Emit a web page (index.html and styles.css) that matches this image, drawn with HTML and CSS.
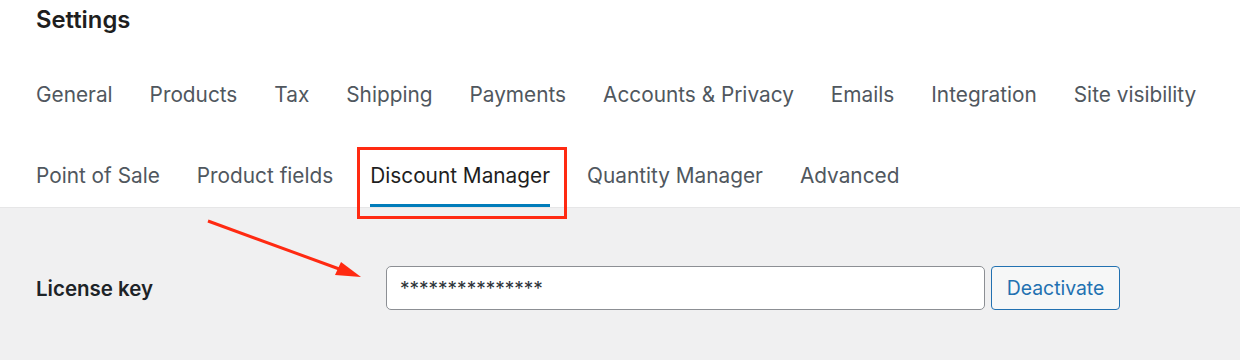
FILE: index.html
```html
<!DOCTYPE html>
<html lang="en">
<head>
    <meta charset="UTF-8">
    <meta name="viewport" content="width=device-width, initial-scale=1.0">
    <title>Settings</title>
    <link rel="stylesheet" href="styles.css">
</head>
<body>
    <div class="page">
        <header class="top">
            <h1>Settings</h1>
            <nav class="tabs">
                <a class="tab">General</a>
                <a class="tab">Products</a>
                <a class="tab">Tax</a>
                <a class="tab">Shipping</a>
                <a class="tab">Payments</a>
                <a class="tab">Accounts &amp; Privacy</a>
                <a class="tab">Emails</a>
                <a class="tab">Integration</a>
                <a class="tab">Site visibility</a>
                <a class="tab">Point of Sale</a>
                <a class="tab">Product fields</a>
                <a class="tab active">Discount Manager</a>
                <a class="tab">Quantity Manager</a>
                <a class="tab">Advanced</a>
            </nav>
        </header>

        <section class="panel">
            <div class="form-row">
                <label for="licenseKey">License key</label>
                <div class="field">
                    <input type="text" id="licenseKey" value="***************">
                    <button type="button">Deactivate</button>
                </div>
            </div>
        </section>

        <!-- annotation drawn on top of the screenshot -->
        <svg class="marks" width="1240" height="360" viewBox="0 0 1240 360">
            <rect x="358.5" y="148.5" width="207" height="69" fill="none" stroke="#ff2a12" stroke-width="3"/>
            <line x1="208" y1="221" x2="342" y2="270" stroke="#ff2a12" stroke-width="3"/>
            <polygon points="361,277 335,275 341,262" fill="#ff2a12"/>
        </svg>
    </div>
</body>
</html>
```

FILE: styles.css
```css
body {
    margin: 0;
    font-family: Inter, "Noto Sans", sans-serif;
    background-color: #ffffff;
    color: #1e1e1e;
}

.page {
    position: relative;
    width: 1240px;
    height: 360px;
    overflow: hidden;
}

.top {
    padding: 8px 36px 0;
}

h1 {
    margin: 0;
    font-size: 23.8px;
    line-height: 24px;
    font-weight: 600;
    color: #1e1e1e;
}

.tabs {
    display: flex;
    flex-wrap: wrap;
    column-gap: 37px;
    row-gap: 19px;
    margin-top: 32px;
}

.tab {
    padding: 19px 0 16px;
    font-size: 20.8px;
    line-height: 24px;
    color: #50575e;
    border-bottom: 3px solid transparent;
    cursor: pointer;
}

.tab.active {
    color: #1e1e1e;
    border-bottom-color: #007cba;
}

.panel {
    background-color: #f0f0f1;
    border-top: 1px solid #e6e6e7;
    padding: 58px 36px 0;
    height: 200px;
}

.form-row {
    display: grid;
    grid-template-columns: 350px 1fr;
    align-items: center;
}

label {
    font-size: 20.5px;
    font-weight: 600;
    color: #1d2327;
}

.field {
    display: flex;
    gap: 6px;
}

input {
    width: 599px;
    height: 44px;
    box-sizing: border-box;
    padding: 0 13px;
    border: 1px solid #8c8f94;
    border-radius: 5px;
    background: #ffffff;
    font-family: Inter, sans-serif;
    font-size: 19px;
    color: #2c3338;
}

button {
    width: 129px;
    height: 44px;
    background-color: #f6f7f7;
    color: #2271b1;
    border: 1px solid #2271b1;
    border-radius: 4px;
    font-family: Inter, sans-serif;
    font-size: 19.4px;
    cursor: pointer;
}

button:hover {
    background-color: #f0f0f1;
}

.marks {
    position: absolute;
    left: 0;
    top: 0;
    pointer-events: none;
}
```
